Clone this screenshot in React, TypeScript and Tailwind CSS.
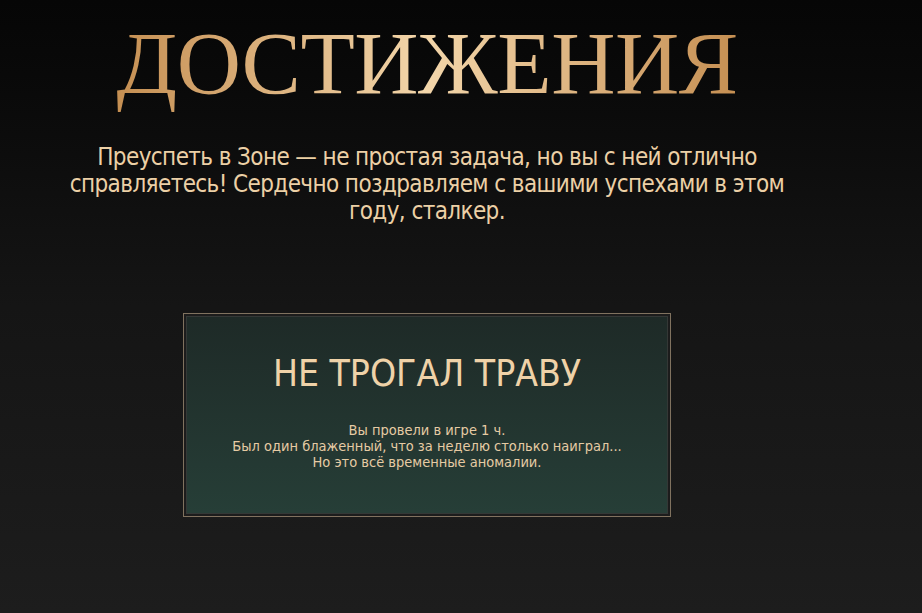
export default function App() {
  return (
    <div className="min-h-screen w-full bg-gradient-to-b from-[#060606] via-[#151515] to-[#1d1d1d] overflow-hidden">
      <div className="w-[854px] flex flex-col items-center">
        {/* heading with gold gradient */}
        <h1
          className="mt-[13px] text-[89px] leading-[100px] tracking-[-0.5px] bg-gradient-to-r from-[#c58f52] via-[#f3d6aa] to-[#c58f52] bg-clip-text text-transparent"
          style={{ fontFamily: '"Liberation Serif", serif' }}
        >
          ДОСТИЖЕНИЯ
        </h1>

        <p
          className="mt-[31px] text-center text-[24px] leading-[27px] tracking-[-0.6px] text-[#ecd0a6]"
          style={{ fontFamily: '"DejaVu Sans Condensed", "DejaVu Sans", sans-serif' }}
        >
          Преуспеть в Зоне — не простая задача, но вы с ней отлично
          <br />
          справляетесь! Сердечно поздравляем с вашими успехами в этом
          <br />
          году, сталкер.
        </p>

        {/* achievement card */}
        <div className="mt-[88px] w-[488px] h-[204px] border border-[#80725f] p-[2px] bg-[#1c1c1c]">
          <div className="h-full w-full border border-[#343836] bg-gradient-to-b from-[#1e2a27] to-[#263e37] flex flex-col items-center pt-[37px]">
            <div
              className="text-[37px] leading-[40px] text-[#efd2a8]"
              style={{ fontFamily: '"DejaVu Sans Condensed", "DejaVu Sans", sans-serif' }}
            >
              НЕ ТРОГАЛ ТРАВУ
            </div>
            <div
              className="mt-[28px] text-center text-[14.5px] leading-[16px] text-[#e6cba4]"
              style={{ fontFamily: '"DejaVu Sans Condensed", "DejaVu Sans", sans-serif' }}
            >
              <div>Вы провели в игре 1 ч.</div>
              <div>Был один блаженный, что за неделю столько наиграл...</div>
              <div>Но это всё временные аномалии.</div>
            </div>
          </div>
        </div>
      </div>
    </div>
  );
}
